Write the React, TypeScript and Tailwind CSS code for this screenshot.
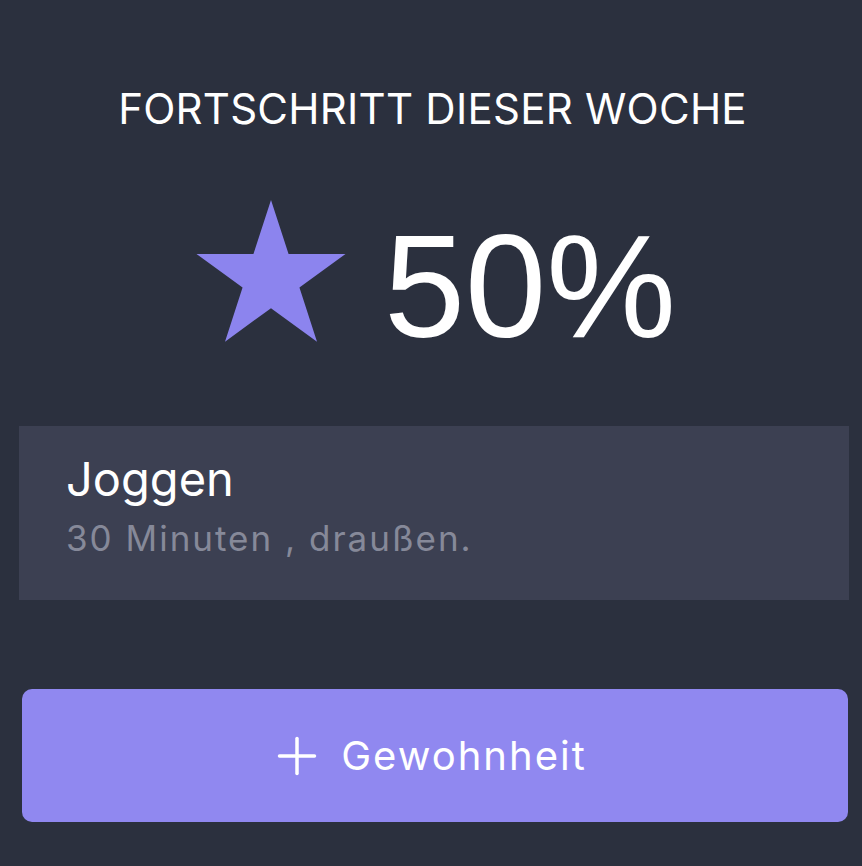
import { Plus } from 'lucide-react';

const stats = {
  title: 'FORTSCHRITT DIESER WOCHE',
  percent: 50,
};

const habits = [{ name: 'Joggen', detail: '30 Minuten , draußen.' }];

function Star() {
  return (
    <svg width="150" height="142" viewBox="0 0 150 142" className="shrink-0">
      <path
        d="M75 0 L92.57 54.11 L149.47 54.1 L103.44 87.54 L121 141.65 L75 108.2 L29 141.65 L46.56 87.54 L0.53 54.1 L57.43 54.11 Z"
        fill="#8c84ee"
      />
    </svg>
  );
}

export default function App() {
  return (
    <div className="min-h-[866px] bg-[#2b303e] pl-[19px] pr-[13px] pt-[88px] font-['Inter',sans-serif]">
      <h1 className="-ml-[3px] text-center text-[42px] leading-none font-normal tracking-[0.25px] text-white">
        {stats.title}
      </h1>

      <div className="mt-[70px] flex items-start justify-center gap-[38px] pl-[4px]">
        <Star />
        <span className="mt-[14px] font-['Liberation_Sans',sans-serif] text-[146px] leading-none text-white">
          {stats.percent}%
        </span>
      </div>

      <div className="mt-[66px]">
        {habits.map((habit) => (
          <div key={habit.name} className="h-[174px] bg-[#3c4052] pl-[47px] pt-[29px]">
            <div className="text-[47px] leading-none text-white">{habit.name}</div>
            <div className="mt-[19px] text-[35px] leading-none tracking-[2px] text-[#868999]">{habit.detail}</div>
          </div>
        ))}
      </div>

      <button className="mt-[89px] ml-[3px] flex h-[133px] w-[826px] items-center justify-center gap-[14px] rounded-[10px] bg-[#9088f0] pr-[16px] text-white">
        <Plus size={60} strokeWidth={1.4} />
        <span className="text-[40px] leading-none tracking-[2px]">Gewohnheit</span>
      </button>
    </div>
  );
}
